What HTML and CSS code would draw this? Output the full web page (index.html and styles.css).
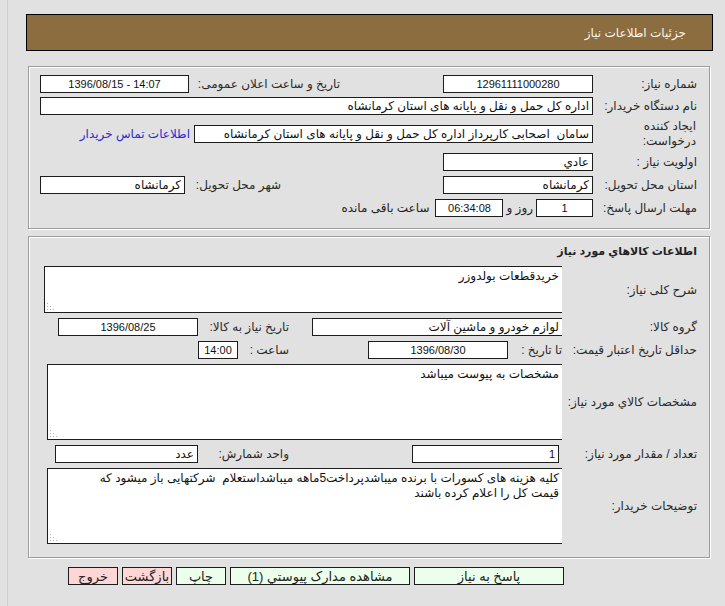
FILE: index.html
```html
<!DOCTYPE html>
<html lang="fa" dir="rtl">
<head>
<meta charset="utf-8">
<title>جزئیات اطلاعات نیاز</title>
<link rel="stylesheet" href="styles.css">
</head>
<body>
<div class="page">
  <div class="header">جزئیات اطلاعات نیاز</div>

  <div class="box box1">
    <div class="row h22">
      <div class="lbl w104">شماره نیاز:</div>
      <div class="fld w150 c ltr">12961111000280</div>
      <div class="w103"></div>
      <div class="lbl w151">تاریخ و ساعت اعلان عمومی:</div>
      <div class="fld w149 c ltr">1396/08/15 - 14:07</div>
    </div>
    <div class="row h22">
      <div class="lbl w104">نام دستگاه خریدار:</div>
      <div class="fld grow">اداره کل حمل و نقل و پایانه های استان کرمانشاه</div>
    </div>
    <div class="row h34">
      <div class="lbl w104 two">ایجاد کننده<br>درخواست:</div>
      <div class="fld w399">سامان&nbsp; اصحابی کارپرداز اداره کل حمل و نقل و پایانه های استان کرمانشاه</div>
      <a class="link" href="#">اطلاعات تماس خریدار</a>
    </div>
    <div class="row h22">
      <div class="lbl w104">اولویت نیاز :</div>
      <div class="fld w150">عادي</div>
    </div>
    <div class="row h23">
      <div class="lbl w104">استان محل تحویل:</div>
      <div class="fld w150">کرمانشاه</div>
      <div class="w162"></div>
      <div class="lbl w96">شهر محل تحویل:</div>
      <div class="fld w145">کرمانشاه</div>
    </div>
    <div class="row h23">
      <div class="lbl w104">مهلت ارسال پاسخ:</div>
      <div class="fld w57 c num">1</div>
      <div class="txt day">روز و</div>
      <div class="fld w68 c ltr">06:34:08</div>
      <div class="txt rem">ساعت باقی مانده</div>
    </div>
  </div>

  <div class="box box2">
    <div class="title">اطلاعات کالاهاي مورد نیاز</div>
    <div class="row">
      <div class="lbl w135">شرح کلی نیاز:</div>
      <div class="ta ta1">خریدقطعات بولدوزر<span class="grip"><svg width="7" height="7" viewBox="0 0 7 7"><g fill="#b0b0b0"><rect x="0" y="0" width="1" height="1"/><rect x="0" y="3" width="1" height="1"/><rect x="3" y="3" width="1" height="1"/><rect x="0" y="6" width="1" height="1"/><rect x="3" y="6" width="1" height="1"/><rect x="6" y="6" width="1" height="1"/></g></svg></span></div>
    </div>
    <div class="row h18 gap5">
      <div class="lbl w135">گروه کالا:</div>
      <div class="fld w250 nr">لوازم خودرو و ماشین آلات</div>
      <div class="w23"></div>
      <div class="lbl w91">تاریخ نیاز به کالا:</div>
      <div class="fld w140 c ltr">1396/08/25</div>
    </div>
    <div class="row h18 gap5">
      <div class="lbl w135">حداقل تاریخ اعتبار قیمت:</div>
      <div class="lbl w52">تا تاریخ :</div>
      <div class="fld w140 c ltr mr2">1396/08/30</div>
      <div class="w79"></div>
      <div class="lbl w51">ساعت :</div>
      <div class="fld w40 c ltr">14:00</div>
    </div>
    <div class="row gap5">
      <div class="lbl w135">مشخصات کالاي مورد نیاز:</div>
      <div class="ta ta2">مشخصات به پیوست میباشد<span class="grip"><svg width="7" height="7" viewBox="0 0 7 7"><g fill="#b0b0b0"><rect x="0" y="0" width="1" height="1"/><rect x="0" y="3" width="1" height="1"/><rect x="3" y="3" width="1" height="1"/><rect x="0" y="6" width="1" height="1"/><rect x="3" y="6" width="1" height="1"/><rect x="6" y="6" width="1" height="1"/></g></svg></span></div>
    </div>
    <div class="row h18 gap5">
      <div class="lbl w135">تعداد / مقدار مورد نیاز:</div>
      <div class="w3"></div>
      <div class="fld w147 num">1</div>
      <div class="w123"></div>
      <div class="lbl w91">واحد شمارش:</div>
      <div class="fld w143">عدد</div>
    </div>
    <div class="row gap5">
      <div class="lbl w135">توضیحات خریدار:</div>
      <div class="ta ta2">کلیه هزینه های کسورات با برنده میباشدپرداخت5ماهه میباشداستعلام&nbsp; شرکتهایی باز میشود که<br>قیمت کل را اعلام کرده باشند<span class="grip"><svg width="7" height="7" viewBox="0 0 7 7"><g fill="#b0b0b0"><rect x="0" y="0" width="1" height="1"/><rect x="0" y="3" width="1" height="1"/><rect x="3" y="3" width="1" height="1"/><rect x="0" y="6" width="1" height="1"/><rect x="3" y="6" width="1" height="1"/><rect x="6" y="6" width="1" height="1"/></g></svg></span></div>
    </div>
  </div>

  <div class="actions">
    <div class="btn green w150">پاسخ به نیاز</div>
    <div class="btn green w180">مشاهده مدارک پیوستي (1)</div>
    <div class="btn green w50">چاپ</div>
    <div class="btn red w50">بازگشت</div>
    <div class="btn red w50">خروج</div>
  </div>
</div>
</body>
</html>
```

FILE: styles.css
```css
html {
  background: #e1e1e1;
}
body {
  margin: 0;
  font-family: "Liberation Sans", "DejaVu Sans", sans-serif;
  font-size: 12px;
  color: #222;
}
.page {
  margin-left: 7px;
  border-left: 1px solid #cdcdcd;
  min-height: 606px;
  box-sizing: border-box;
  padding-top: 14px;
}
.header {
  margin: 0 12px 0 18px;
  height: 37px;
  box-sizing: border-box;
  border: 1px solid #000;
  background: #8c6d40;
  color: #fbf5e8;
  font-size: 12px;
  display: flex;
  align-items: center;
  padding-right: 26px;
}
.box {
  margin: 0 15px 0 20px;
  border: 1px solid #9c9c9c;
  box-shadow: 1px 1px 0 #fff, inset 1px 1px 0 #fff;
}
.box1 {
  margin-top: 15px;
  padding: 6px 12px 9px 11px;
}
.box2 {
  margin-top: 7px;
  padding: 0 12px 13px 15px;
}
.row {
  display: flex;
  align-items: center;
}
.h18 { height: 18px; }
.h22 { height: 22px; }
.h23 { height: 23px; }
.h34 { height: 34px; }
.gap5 { margin-top: 5px; }

.lbl {
  flex: none;
  white-space: nowrap;
  color: #2a2a2a;
}
.two {
  white-space: normal;
  line-height: 15px;
  padding-right: 1px;
  box-sizing: border-box;
}
.fld {
  flex: none;
  height: 18px;
  box-sizing: border-box;
  border: 1px solid #1c1c1c;
  background: #fff;
  padding: 0 3px;
  line-height: 16px;
  white-space: nowrap;
  overflow: hidden;
  color: #111;
}
.fld.nr { border-right: none; }
.c { text-align: center; }
.ltr { direction: ltr; font-size: 11px; }
.num { font-size: 11px; }
.grow { flex: 1; }
.mr2 { margin-right: 2px; }

.w3 { width: 3px; flex: none; }
.w23 { width: 23px; flex: none; }
.w40 { width: 40px; }
.w50 { width: 50px; }
.w51 { width: 51px; }
.w52 { width: 52px; }
.w57 { width: 57px; }
.w68 { width: 68px; }
.w79 { width: 79px; flex: none; }
.w91 { width: 91px; }
.w96 { width: 96px; }
.w103 { width: 103px; flex: none; }
.w104 { width: 104px; }
.w123 { width: 123px; flex: none; }
.w135 { width: 135px; }
.w140 { width: 140px; }
.w143 { width: 143px; }
.w145 { width: 145px; }
.w147 { width: 147px; }
.w149 { width: 149px; }
.w150 { width: 150px; }
.w151 { width: 151px; }
.w162 { width: 162px; flex: none; }
.w180 { width: 180px; }
.w250 { width: 250px; }
.w399 { width: 399px; }

.link {
  margin-right: 4px;
  color: #2b2bd0;
  text-decoration: none;
  white-space: nowrap;
}
.txt { white-space: nowrap; }
.day { margin: 0 3px 0 3px; }
.rem { margin-right: 6px; }

.title {
  height: 29px;
  display: flex;
  align-items: center;
  font-weight: bold;
  font-size: 11px;
  color: #222;
}
.ta {
  position: relative;
  flex: 1;
  box-sizing: border-box;
  background: #fff;
  border: 1px solid #1c1c1c;
  border-right: none;
  padding: 2px 3px 0 3px;
  line-height: 15px;
  color: #111;
  overflow: hidden;
}
.ta1 { height: 47px; }
.ta2 { height: 76px; margin-left: 3px; }
.grip {
  position: absolute;
  left: 2px;
  bottom: 2px;
  width: 7px;
  height: 7px;
  line-height: 0;
}

.actions {
  display: flex;
  gap: 4px;
  margin-top: 9px;
  padding-right: 161px;
}
.btn {
  flex: none;
  height: 18px;
  box-sizing: border-box;
  border: 1px solid #1c1c1c;
  display: flex;
  align-items: center;
  justify-content: center;
  font-size: 13px;
  color: #222;
  white-space: nowrap;
}
.green { background: #ecfeec; }
.red { background: #ffd6d6; }
```
